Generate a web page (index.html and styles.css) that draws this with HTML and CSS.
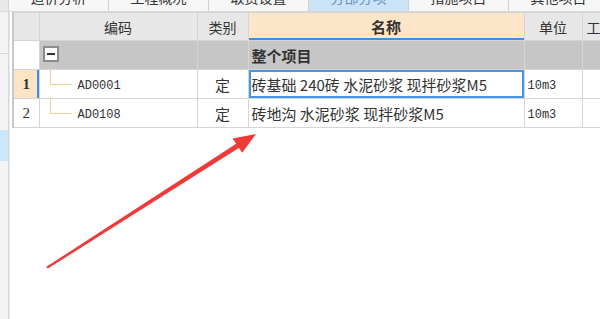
FILE: index.html
```html
<!DOCTYPE html>
<html lang="zh">
<head>
    <meta charset="UTF-8">
    <title>分部分项</title>
    <link rel="stylesheet" href="styles.css">
</head>
<body>
    <div id="wrapper">
        <div class="side">
            <div class="side-top"></div>
            <div class="side-a"></div>
            <div class="side-b"></div>
            <div class="side-sel"></div>
            <div class="side-c"></div>
        </div>
        <div class="main">
            <div class="tabs">
                <div class="tab"><span>造价分析</span></div>
                <div class="tab"><span>工程概况</span></div>
                <div class="tab"><span>取费设置</span></div>
                <div class="tab active"><span>分部分项</span></div>
                <div class="tab"><span>措施项目</span></div>
                <div class="tab"><span>其他项目</span></div>
            </div>
            <div class="grid-area">
                <table class="grid">
                    <colgroup>
                        <col class="c-no"><col class="c-code"><col class="c-type"><col class="c-name"><col class="c-unit"><col class="c-more">
                    </colgroup>
                    <tr class="head">
                        <td></td>
                        <td>编码</td>
                        <td>类别</td>
                        <td class="head-name">名称</td>
                        <td>单位</td>
                        <td class="cut">工程量</td>
                    </tr>
                    <tr class="group">
                        <td class="no"></td>
                        <td class="code"><span class="fold"></span></td>
                        <td></td>
                        <td class="name bold">整个项目</td>
                        <td></td>
                        <td></td>
                    </tr>
                    <tr>
                        <td class="no current">1</td>
                        <td class="code"><span class="branch"></span>AD0001</td>
                        <td class="type">定</td>
                        <td class="name selected">砖基础 240砖 水泥砂浆 现拌砂浆M5</td>
                        <td class="unit">10m3</td>
                        <td></td>
                    </tr>
                    <tr>
                        <td class="no">2</td>
                        <td class="code"><span class="branch last"></span>AD0108</td>
                        <td class="type">定</td>
                        <td class="name">砖地沟 水泥砂浆 现拌砂浆M5</td>
                        <td class="unit">10m3</td>
                        <td></td>
                    </tr>
                </table>
            </div>
        </div>
        <!-- 标注用的红色箭头 -->
        <svg class="arrow" width="600" height="319" viewBox="0 0 600 319">
            <polygon points="46,267 236.2,143.7 232.6,138.6 256,134 242.2,152.8 238.8,147.9 48,268.5" fill="#ef3a3a"/>
        </svg>
    </div>
</body>
</html>
```

FILE: styles.css
```css
body{margin: 0;}
#wrapper{
    width: 600px;
    height: 319px;
    position: relative;
    display: flex;
    overflow: hidden;
    background-color: #ffffff;
    font-family: "Noto Sans CJK SC", sans-serif;
    color: #333333;
}
.side{
    width: 8px;
    border-right: 1px solid #d6d6d6;
    display: flex;
    flex-direction: column;
    flex-shrink: 0;
}
.side-top{
    height: 11px;
    background-color: #e9e9e9;
    border-bottom: 1px solid #d8d8d8;
}
.side-a{
    height: 41px;
    background-color: #f3f3f3;
    border-bottom: 1px solid #d8d8d8;
}
.side-b{
    height: 76px;
    background-color: #f4f4f4;
}
.side-sel{
    height: 31px;
    background-color: #cce6fb;
}
.side-c{
    flex: 1;
    background-color: #f4f4f4;
}
.main{
    flex: 1;
    display: flex;
    flex-direction: column;
    min-width: 0;
}
.tabs{
    height: 11px;
    display: flex;
    border-bottom: 1px solid #d8d8d8;
    background-color: #f4f4f4;
    overflow: hidden;
}
.tab{
    width: 99px;
    flex-shrink: 0;
    border-right: 1px solid #cfcfcf;
    background-color: #f7f7f7;
    text-align: center;
    overflow: hidden;
}
.tab span{
    display: block;
    font-size: 14px;
    line-height: 20px;
    margin-top: -13px;
}
.tab.active{
    background-color: #cce4f7;
    color: #6a93c0;
}
.grid-area{
    flex: 1;
    border-left: 1px solid #ececec;
    padding-left: 2px;
    overflow: hidden;
}
.grid{
    /* 칸 사이 선을 한 줄로 */
    border-collapse: collapse;
    table-layout: fixed;
    width: 620px;
    border-left: 2px solid #c9c9c9;
}
.c-no{width: 26px;}
.c-code{width: 158px;}
.c-type{width: 51px;}
.c-name{width: 276px;}
.c-unit{width: 58px;}
.c-more{width: 51px;}
.grid td{
    height: 28px;
    padding: 0;
    border: 1px solid #d5d5d5;
    white-space: nowrap;
    overflow: hidden;
    position: relative;
}
.head td{
    height: 27px;
    background-color: #e7e7e7;
    text-align: center;
    font-size: 14px;
    color: #333333;
}
.head td.cut{
    text-align: left;
    padding-left: 4px;
}
.head td.head-name{
    background-color: #fde5c9;
    font-weight: bold;
    font-size: 15px;
    box-shadow: inset 0 -2px 0 #3b8fe6;
}
.group td{
    background-color: #c6c6c6;
}
.group td.no{
    background-color: #ffffff;
}
.no{
    text-align: center;
    font-family: "Liberation Serif", serif;
    font-size: 15px;
}
.no.current{
    background-color: #fde4c4;
    font-weight: bold;
    box-shadow: inset -2px 0 0 #3d8fe8;
}
.code{
    font-family: "Liberation Mono", monospace;
    font-size: 12px;
    padding-left: 38px !important;
    padding-top: 4px !important;
    height: 24px !important;
}
.fold{
    position: absolute;
    left: 3px;
    top: 5px;
    width: 12px;
    height: 12px;
    border: 2px solid #8c8c8c;
    background-color: #ffffff;
}
.fold::after{
    content: "";
    position: absolute;
    left: 2px;
    top: 5px;
    width: 8px;
    height: 2px;
    background-color: #333333;
}
.branch{
    position: absolute;
    left: 10px;
    top: -8px;
    width: 21px;
    height: 22px;
    border-left: 1px solid #f9cd95;
    border-bottom: 1px solid #f9cd95;
}
.branch.last{
    top: -15px;
    height: 29px;
}
.type{
    text-align: center;
    font-size: 15px;
}
.name{
    font-size: 15px;
    padding-left: 3px !important;
}
.bold{font-weight: bold;}
.name.selected{
    box-shadow: inset 0 0 0 2px #4a94e8;
}
.unit{
    font-family: "Liberation Mono", monospace;
    font-size: 12px;
    padding-left: 3px !important;
    padding-top: 4px !important;
    height: 24px !important;
}
.arrow{
    position: absolute;
    left: 0;
    top: 0;
    pointer-events: none;
}
```
